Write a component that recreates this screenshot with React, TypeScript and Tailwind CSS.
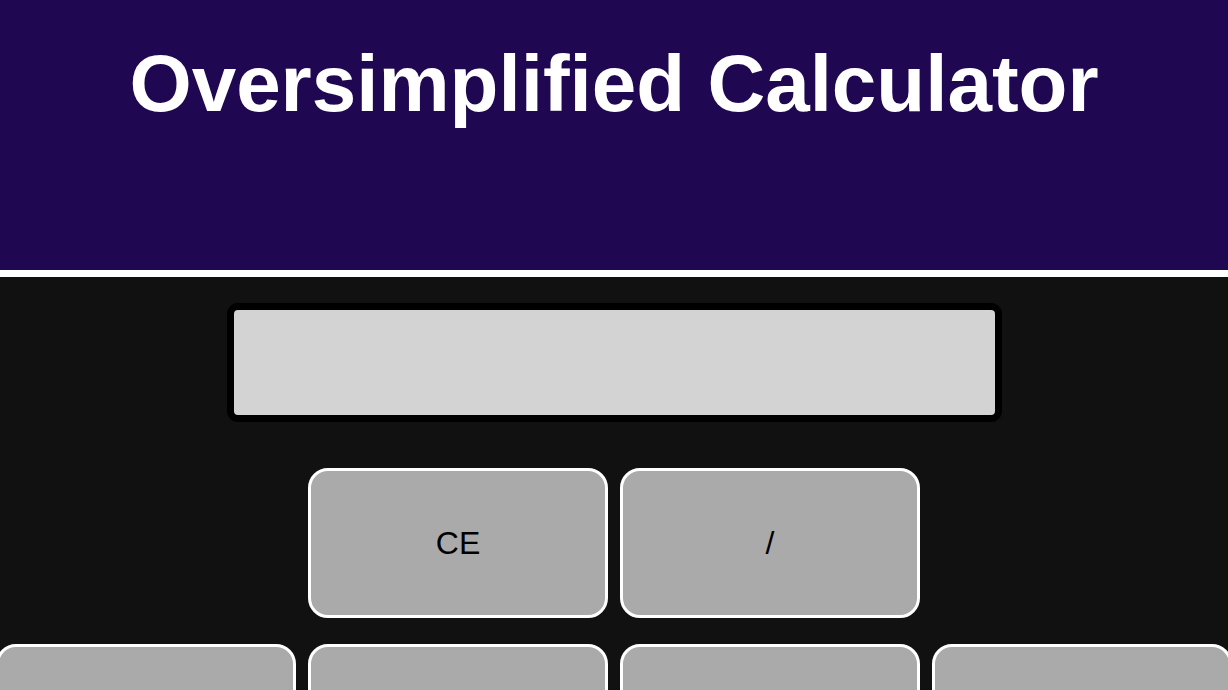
const rows: string[][] = [
  ["CE", "/"],
  ["7", "8", "9", "*"],
  ["4", "5", "6", "-"],
  ["1", "2", "3", "+"],
  ["0", ".", "="],
];

function Key({ label }: { label: string }) {
  return (
    <button className="flex h-[150px] w-[300px] shrink-0 items-center justify-center rounded-[20px] border-[3px] border-white bg-[#aaaaaa] text-[32px] text-black">
      {label}
    </button>
  );
}

export default function App() {
  return (
    <div className="min-h-screen overflow-hidden bg-[#111111] font-['Liberation_Sans',Arial,sans-serif]">
      <header className="h-[277px] border-b-[7px] border-white bg-[#1f0751] pt-[38px]">
        <h1 className="text-center text-[80px] font-bold leading-[92px] text-white">
          Oversimplified Calculator
        </h1>
      </header>
      <main className="flex flex-col items-center pt-[26px]">
        <div className="h-[119px] w-[775px] rounded-[11px] border-[7px] border-black bg-[#d3d3d3]" />
        <div className="mt-[46px] flex w-full flex-col gap-[26px]">
          {rows.map((row, i) => (
            <div key={i} className="flex justify-center gap-3">
              {row.map((k) => (
                <Key key={k} label={k} />
              ))}
            </div>
          ))}
        </div>
      </main>
    </div>
  );
}
